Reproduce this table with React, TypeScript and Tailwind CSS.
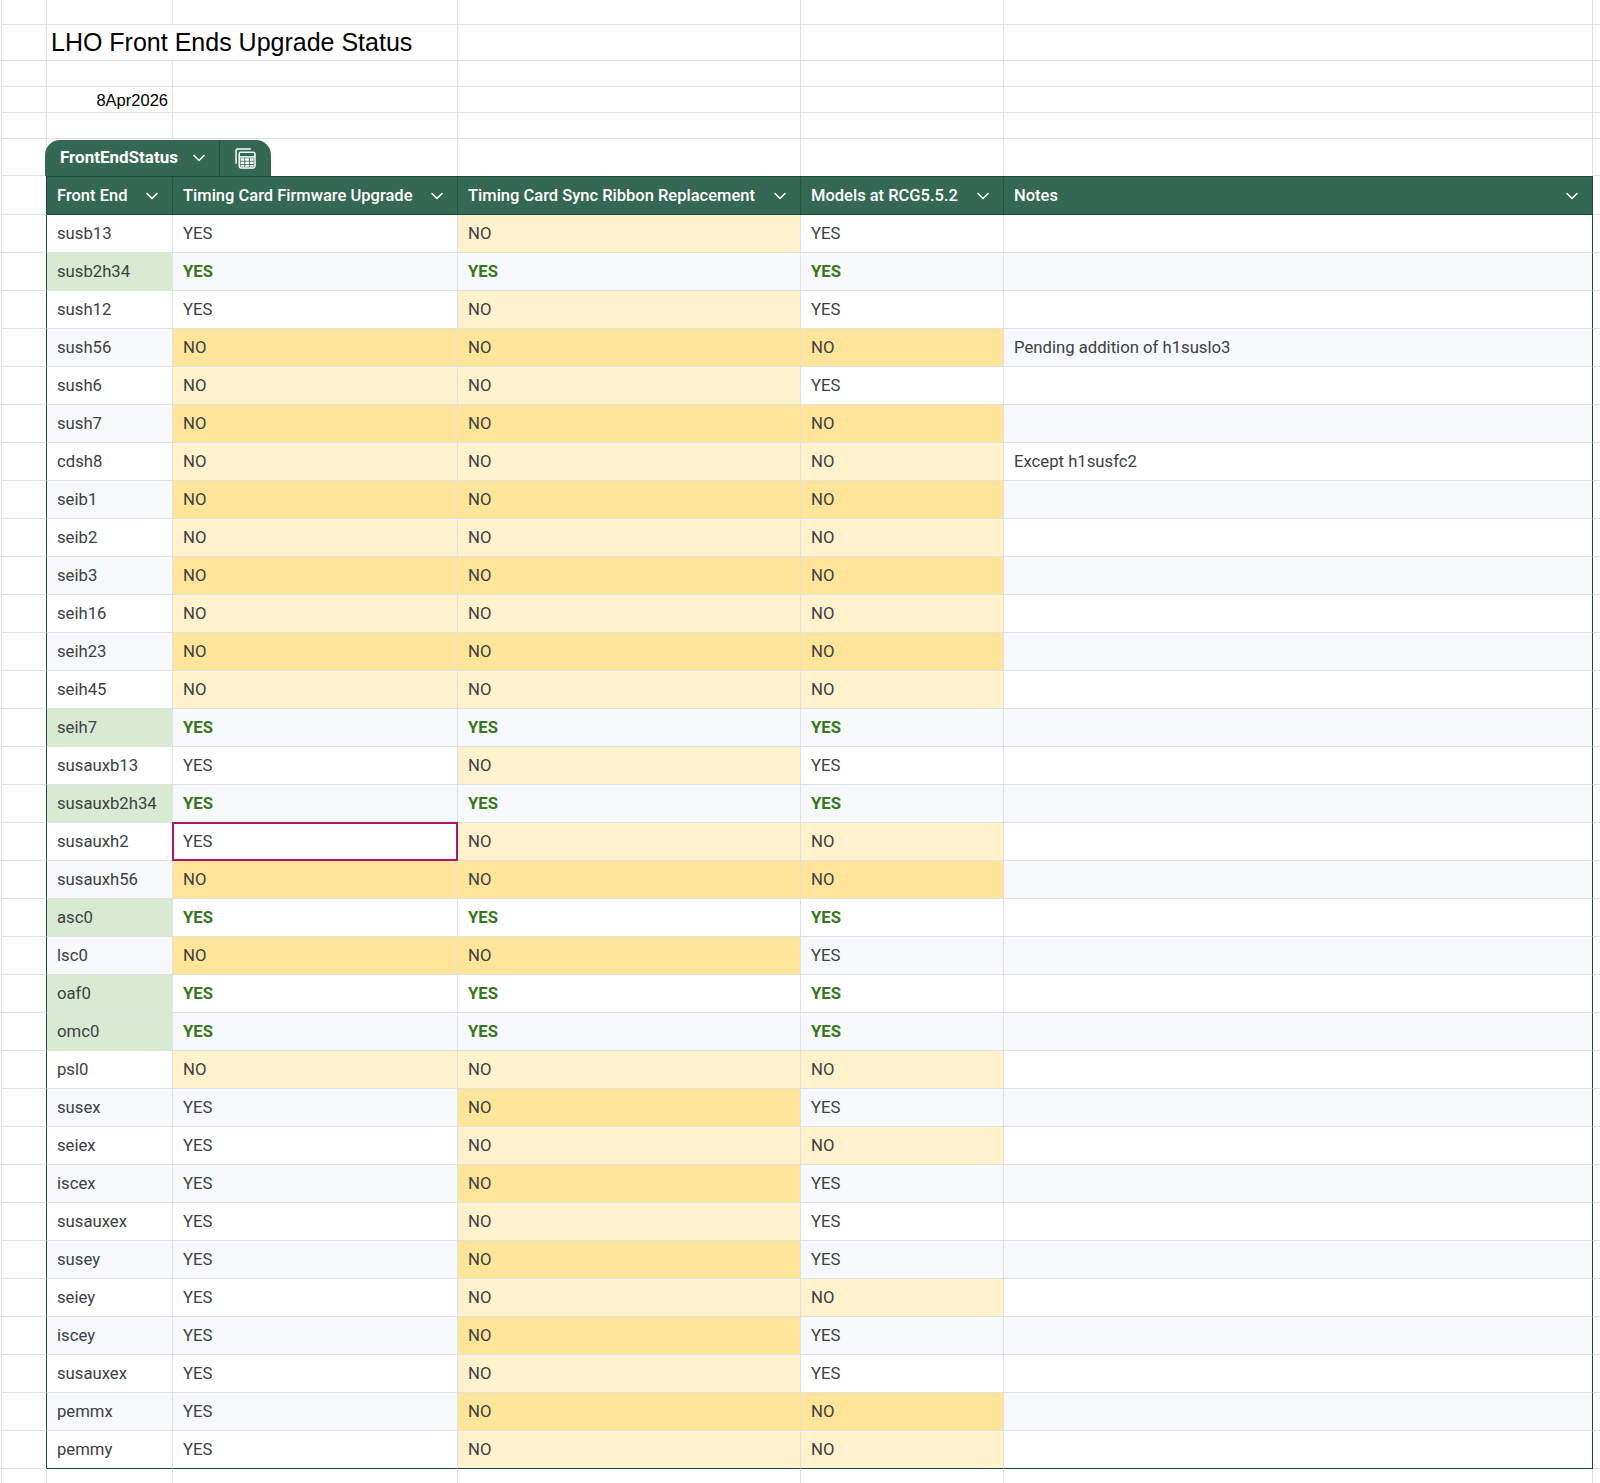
import React from 'react';

type Row = {
  fe: string;
  fw: string;
  sync: string;
  models: string;
  notes?: string;
  selected?: boolean;
};

const rows: Row[] = [
  { fe: 'susb13', fw: 'YES', sync: 'NO', models: 'YES' },
  { fe: 'susb2h34', fw: 'YES', sync: 'YES', models: 'YES' },
  { fe: 'sush12', fw: 'YES', sync: 'NO', models: 'YES' },
  { fe: 'sush56', fw: 'NO', sync: 'NO', models: 'NO', notes: 'Pending addition of h1suslo3' },
  { fe: 'sush6', fw: 'NO', sync: 'NO', models: 'YES' },
  { fe: 'sush7', fw: 'NO', sync: 'NO', models: 'NO' },
  { fe: 'cdsh8', fw: 'NO', sync: 'NO', models: 'NO', notes: 'Except h1susfc2' },
  { fe: 'seib1', fw: 'NO', sync: 'NO', models: 'NO' },
  { fe: 'seib2', fw: 'NO', sync: 'NO', models: 'NO' },
  { fe: 'seib3', fw: 'NO', sync: 'NO', models: 'NO' },
  { fe: 'seih16', fw: 'NO', sync: 'NO', models: 'NO' },
  { fe: 'seih23', fw: 'NO', sync: 'NO', models: 'NO' },
  { fe: 'seih45', fw: 'NO', sync: 'NO', models: 'NO' },
  { fe: 'seih7', fw: 'YES', sync: 'YES', models: 'YES' },
  { fe: 'susauxb13', fw: 'YES', sync: 'NO', models: 'YES' },
  { fe: 'susauxb2h34', fw: 'YES', sync: 'YES', models: 'YES' },
  { fe: 'susauxh2', fw: 'YES', sync: 'NO', models: 'NO', selected: true },
  { fe: 'susauxh56', fw: 'NO', sync: 'NO', models: 'NO' },
  { fe: 'asc0', fw: 'YES', sync: 'YES', models: 'YES' },
  { fe: 'lsc0', fw: 'NO', sync: 'NO', models: 'YES' },
  { fe: 'oaf0', fw: 'YES', sync: 'YES', models: 'YES' },
  { fe: 'omc0', fw: 'YES', sync: 'YES', models: 'YES' },
  { fe: 'psl0', fw: 'NO', sync: 'NO', models: 'NO' },
  { fe: 'susex', fw: 'YES', sync: 'NO', models: 'YES' },
  { fe: 'seiex', fw: 'YES', sync: 'NO', models: 'NO' },
  { fe: 'iscex', fw: 'YES', sync: 'NO', models: 'YES' },
  { fe: 'susauxex', fw: 'YES', sync: 'NO', models: 'YES' },
  { fe: 'susey', fw: 'YES', sync: 'NO', models: 'YES' },
  { fe: 'seiey', fw: 'YES', sync: 'NO', models: 'NO' },
  { fe: 'iscey', fw: 'YES', sync: 'NO', models: 'YES' },
  { fe: 'susauxex', fw: 'YES', sync: 'NO', models: 'YES' },
  { fe: 'pemmx', fw: 'YES', sync: 'NO', models: 'NO' },
  { fe: 'pemmy', fw: 'YES', sync: 'NO', models: 'NO' },
];

const grid = 'shrink-0 border-r border-b border-[#e1e1e1]';

const Chevron = () => (
  <svg width="12" height="8" viewBox="0 0 12 8" fill="none" className="shrink-0">
    <polyline points="1,1.5 6,6.5 11,1.5" stroke="white" strokeWidth="1.5" strokeLinecap="round" strokeLinejoin="round" />
  </svg>
);

const TableIcon = () => (
  <svg width="21" height="21" viewBox="0 0 20 20" fill="none">
    <path d="M1 15V2.2C1 1.5 1.5 1 2.2 1H15" stroke="white" strokeWidth="1.4" />
    <rect x="4" y="4" width="15" height="15" rx="1.6" stroke="white" strokeWidth="1.4" />
    <line x1="4" y1="8.5" x2="19" y2="8.5" stroke="white" strokeWidth="1.4" />
    <rect x="5.3" y="9.8" width="3.6" height="2.4" fill="white" />
    <rect x="9.7" y="9.8" width="3.6" height="2.4" fill="white" />
    <rect x="14.1" y="9.8" width="3.6" height="2.4" fill="white" />
    <rect x="5.3" y="13" width="3.6" height="2.4" fill="white" />
    <rect x="9.7" y="13" width="3.6" height="2.4" fill="white" />
    <rect x="14.1" y="13" width="3.6" height="2.4" fill="white" />
    <rect x="5.3" y="16.2" width="3.6" height="1.6" fill="white" />
    <rect x="9.7" y="16.2" width="3.6" height="1.6" fill="white" />
    <rect x="14.1" y="16.2" width="3.6" height="1.6" fill="white" />
  </svg>
);

// empty sheet row with the plain grid lines
const BlankRow = ({ h }: { h: string }) => (
  <div className={`flex ${h}`}>
    <div className={`${grid} w-[46px] border-l`} />
    <div className={`${grid} w-[126px]`} />
    <div className={`${grid} w-[285px]`} />
    <div className={`${grid} w-[343px]`} />
    <div className={`${grid} w-[203px]`} />
    <div className={`${grid} w-[589px]`} />
    <div className="flex-1 border-b border-[#e1e1e1]" />
  </div>
);

const StatusCell = ({ value, alt, bold, width, selected }: { value: string; alt: boolean; bold: boolean; width: string; selected?: boolean }) => {
  let bg = alt ? 'bg-[#f6f8f9]' : 'bg-white';
  if (value === 'NO') bg = alt ? 'bg-[#ffe599]' : 'bg-[#fff2cc]';
  return (
    <div className={`${grid} ${width} ${bg} relative flex items-center pl-[10px] pt-px`}>
      <span className={bold ? 'font-bold text-[#38761d]' : ''}>{value}</span>
      {selected && <div className="absolute -left-px -top-px -right-px -bottom-px border-2 border-[#b0136a]" />}
    </div>
  );
};

const headers = [
  { label: 'Front End', w: 'w-[126px]' },
  { label: 'Timing Card Firmware Upgrade', w: 'w-[285px]' },
  { label: 'Timing Card Sync Ribbon Replacement', w: 'w-[343px]' },
  { label: 'Models at RCG5.5.2', w: 'w-[203px]' },
];

export default function App() {
  return (
    <div className="w-[1600px] h-[1483px] overflow-hidden bg-white pl-px font-['Roboto',sans-serif] text-[16.7px] text-[#3c4043]">
      <BlankRow h="h-[25px]" />

      {/* title */}
      <div className="flex h-[36px]">
        <div className={`${grid} w-[46px] border-l`} />
        <div className={`${grid} w-[411px] flex items-center pl-[4px] pt-px font-['Liberation_Sans',Arial,sans-serif] text-[25px] text-black whitespace-nowrap`}>
          LHO Front Ends Upgrade Status
        </div>
        <div className={`${grid} w-[343px]`} />
        <div className={`${grid} w-[203px]`} />
        <div className={`${grid} w-[589px]`} />
        <div className="flex-1 border-b border-[#e1e1e1]" />
      </div>

      <BlankRow h="h-[26px]" />

      {/* date */}
      <div className="flex h-[26px]">
        <div className={`${grid} w-[46px] border-l`} />
        <div className={`${grid} w-[126px] flex items-center justify-end pr-[4px] pt-px font-['Liberation_Sans',Arial,sans-serif] text-[16.5px] text-black`}>
          8Apr2026
        </div>
        <div className={`${grid} w-[285px]`} />
        <div className={`${grid} w-[343px]`} />
        <div className={`${grid} w-[203px]`} />
        <div className={`${grid} w-[589px]`} />
        <div className="flex-1 border-b border-[#e1e1e1]" />
      </div>

      <BlankRow h="h-[26px]" />

      {/* table tab */}
      <div className="flex h-[37px]">
        <div className={`${grid} w-[46px] border-l`} />
        <div className="shrink-0 w-[411px] border-r border-[#e1e1e1] flex items-end">
          <div className="-ml-[2px] h-[36px] w-[226px] flex items-stretch rounded-t-[15px] bg-[#356854] text-white">
            <div className="flex items-center gap-[15px] pl-[15px] pr-[14px] border-r border-[#264f3e] font-bold text-[17px]">
              FrontEndStatus
              <Chevron />
            </div>
            <div className="flex items-center pl-[15px] pt-[1px]">
              <TableIcon />
            </div>
          </div>
        </div>
        <div className="shrink-0 w-[343px] border-r border-[#e1e1e1]" />
        <div className="shrink-0 w-[203px] border-r border-[#e1e1e1]" />
        <div className="shrink-0 w-[589px] border-r border-[#e1e1e1]" />
        <div className="flex-1 border-b border-[#e1e1e1]" />
      </div>

      {/* header */}
      <div className="flex h-[39px]">
        <div className="shrink-0 w-[46px] border-l border-b border-r border-l-[#e1e1e1] border-b-[#e1e1e1] border-r-[#1e4836]" />
        <div className="flex bg-[#356854] text-white font-medium text-[16.5px] border-y border-[#1e4836]">
          {headers.map((h) => (
            <div key={h.label} className={`shrink-0 ${h.w} border-r border-[#28553f] flex items-center justify-between pl-[10px] pr-[14px] pt-px`}>
              <span className="whitespace-nowrap">{h.label}</span>
              <Chevron />
            </div>
          ))}
          <div className="shrink-0 w-[589px] border-r border-[#1e4836] flex items-center justify-between pl-[10px] pr-[14px] pt-px">
            <span>Notes</span>
            <Chevron />
          </div>
        </div>
        <div className="flex-1 border-b border-[#e1e1e1]" />
      </div>

      {/* data rows */}
      {rows.map((r, i) => {
        const alt = i % 2 === 1;
        const allYes = r.fw === 'YES' && r.sync === 'YES' && r.models === 'YES';
        const last = i === rows.length - 1;
        const rowBg = alt ? 'bg-[#f6f8f9]' : 'bg-white';
        const bottom = last ? 'border-b-[#1e4836]' : '';
        return (
          <div key={i} className="flex h-[38px]">
            <div className="shrink-0 w-[46px] border-l border-b border-r border-l-[#e1e1e1] border-b-[#e1e1e1] border-r-[#1e4836]" />
            <div className={`${grid} ${bottom} w-[126px] flex items-center pl-[10px] pt-px ${allYes ? 'bg-[#d9ead3]' : rowBg}`}>
              {r.fe}
            </div>
            <StatusCell value={r.fw} alt={alt} bold={allYes} width={`w-[285px] ${bottom}`} selected={r.selected} />
            <StatusCell value={r.sync} alt={alt} bold={allYes} width={`w-[343px] ${bottom}`} />
            <StatusCell value={r.models} alt={alt} bold={allYes} width={`w-[203px] ${bottom}`} />
            <div className={`shrink-0 w-[589px] border-b border-r border-[#e1e1e1] border-r-[#1e4836] ${bottom} ${rowBg} flex items-center pl-[10px] pt-px whitespace-nowrap`}>
              {r.notes}
            </div>
            <div className="flex-1 border-b border-[#e1e1e1]" />
          </div>
        );
      })}

      <BlankRow h="h-[38px]" />
    </div>
  );
}
